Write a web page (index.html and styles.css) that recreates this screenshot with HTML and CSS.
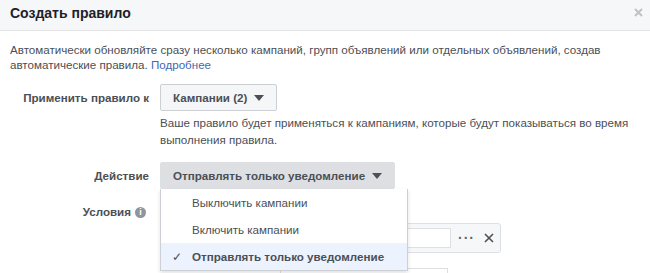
FILE: index.html
```html
<!DOCTYPE html>
<html lang="ru">
<head>
  <meta charset="UTF-8">
  <title>Создать правило</title>
  <link rel="stylesheet" href="styles.css">
</head>
<body>
  <div class="dialog">
    <div class="header">
      <span class="title">Создать правило</span>
      <svg class="close" width="9" height="9" viewBox="0 0 9 9"><path d="M1 1L8 8M8 1L1 8" stroke="#bec2c9" stroke-width="2"/></svg>
    </div>

    <div class="body">
      <p class="intro">Автоматически обновляйте сразу несколько кампаний, групп объявлений или отдельных объявлений, создав автоматические правила. <a href="#">Подробнее</a></p>

      <div class="form">
        <div class="label">Применить правило к</div>
        <div class="field">
          <button class="select">Кампании (2) <span class="caret"></span></button>
          <p class="help">Ваше правило будет применяться к кампаниям, которые будут показываться во время выполнения правила.</p>
        </div>

        <div class="label label-action">Действие</div>
        <div class="field">
          <div class="dropdown">
            <button class="select pressed">Отправлять только уведомление <span class="caret"></span></button>
            <ul class="menu">
              <li>Выключить кампании</li>
              <li>Включить кампании</li>
              <li class="selected"><span class="check">&#10003;</span>Отправлять только уведомление</li>
            </ul>
          </div>
        </div>

        <div class="label label-cond">Условия <span class="info">i</span></div>
        <div class="field conditions">
          <div class="cond-row">
            <div class="cond-input"></div>
            <span class="dots">&middot;&middot;&middot;</span>
            <svg class="remove" width="10" height="10" viewBox="0 0 10 10"><path d="M1 1L9 9M9 1L1 9" stroke="#4b4f56" stroke-width="1.6"/></svg>
          </div>
          <div class="cond-next"></div>
        </div>
      </div>
    </div>
  </div>
</body>
</html>
```

FILE: styles.css
```css
body { margin: 0; background: #fff; font-family: "Liberation Sans", Arial, sans-serif; font-size: 11.6px; color: #4b4f56; overflow: hidden; }
.dialog { width: 650px; height: 273px; overflow: hidden; }
.header { height: 31px; box-sizing: border-box; background: #f6f7f9; border-bottom: 1px solid #e5e5e5; padding: 0 7px 0 10px; display: flex; align-items: center; justify-content: space-between; }
.title { font-size: 14px; font-weight: bold; color: #1d2129; margin-top: -4px; }
.close { margin-top: -6px; }
.body { padding: 11px 10px 0; }
.intro { margin: 0; line-height: 15px; }
.intro a { color: #4267b2; text-decoration: none; }
.form { display: grid; grid-template-columns: 139px 1fr; column-gap: 11px; margin-top: 12px; }
.label { text-align: right; font-weight: bold; color: #4b4f56; line-height: 27px; }
.field { min-width: 0; }
.select { height: 27px; box-sizing: border-box; padding: 0 12px; border: 1px solid #ccd0d5; border-radius: 2px; background: #f5f6f7; font-family: inherit; font-size: 11.6px; font-weight: bold; color: #4b4f56; display: inline-flex; align-items: center; gap: 7px; }
.select.pressed { background: #dddfe2; border-color: #dddfe2; }
.caret { width: 0; height: 0; border-left: 5px solid transparent; border-right: 5px solid transparent; border-top: 6px solid #4b4f56; }
.help { margin: 3px 0 0; line-height: 17px; }
.label-action { margin-top: 14px; }
.field .dropdown { margin-top: 14px; position: relative; display: inline-block; }
.menu { position: absolute; left: 0; top: 27px; width: 248px; margin: 0; padding: 0; list-style: none; background: #fff; border: 1px solid #ccd0d5; border-top: none; box-sizing: border-box; box-shadow: 0 2px 4px rgba(0, 0, 0, 0.12); z-index: 2; }
.menu li { height: 27px; line-height: 27px; padding-left: 31px; color: #4b4f56; position: relative; }
.menu li.selected { background: #ecf3ff; font-weight: bold; color: #4b4f56; }
.check { position: absolute; left: 11px; top: 0; font-weight: normal; color: #4b4f56; }
.label-cond { align-self: start; margin-top: 15px; line-height: 16px; display: flex; justify-content: flex-end; align-items: center; gap: 4px; padding-right: 3px; }
.info { width: 11px; height: 11px; border-radius: 50%; background: #90949c; color: #fff; font-size: 9px; line-height: 11px; text-align: center; font-weight: bold; }
.conditions { margin-top: 34px; }
.cond-row { width: 341px; height: 30px; box-sizing: border-box; background: #f6f7f9; border: 1px solid #dddfe2; border-radius: 3px; display: flex; align-items: center; padding: 0 6px 0 8px; }
.cond-input { flex: 1; height: 20px; background: #fff; border: 1px solid #dddfe2; box-sizing: border-box; margin-right: 7px; }
.dots { font-size: 14px; font-weight: bold; letter-spacing: 1px; color: #606770; margin-right: 9px; }
.cond-next { width: 166px; height: 20px; margin: 15px 0 0 120px; border: 1px solid #dddfe2; background: #fff; }
```
